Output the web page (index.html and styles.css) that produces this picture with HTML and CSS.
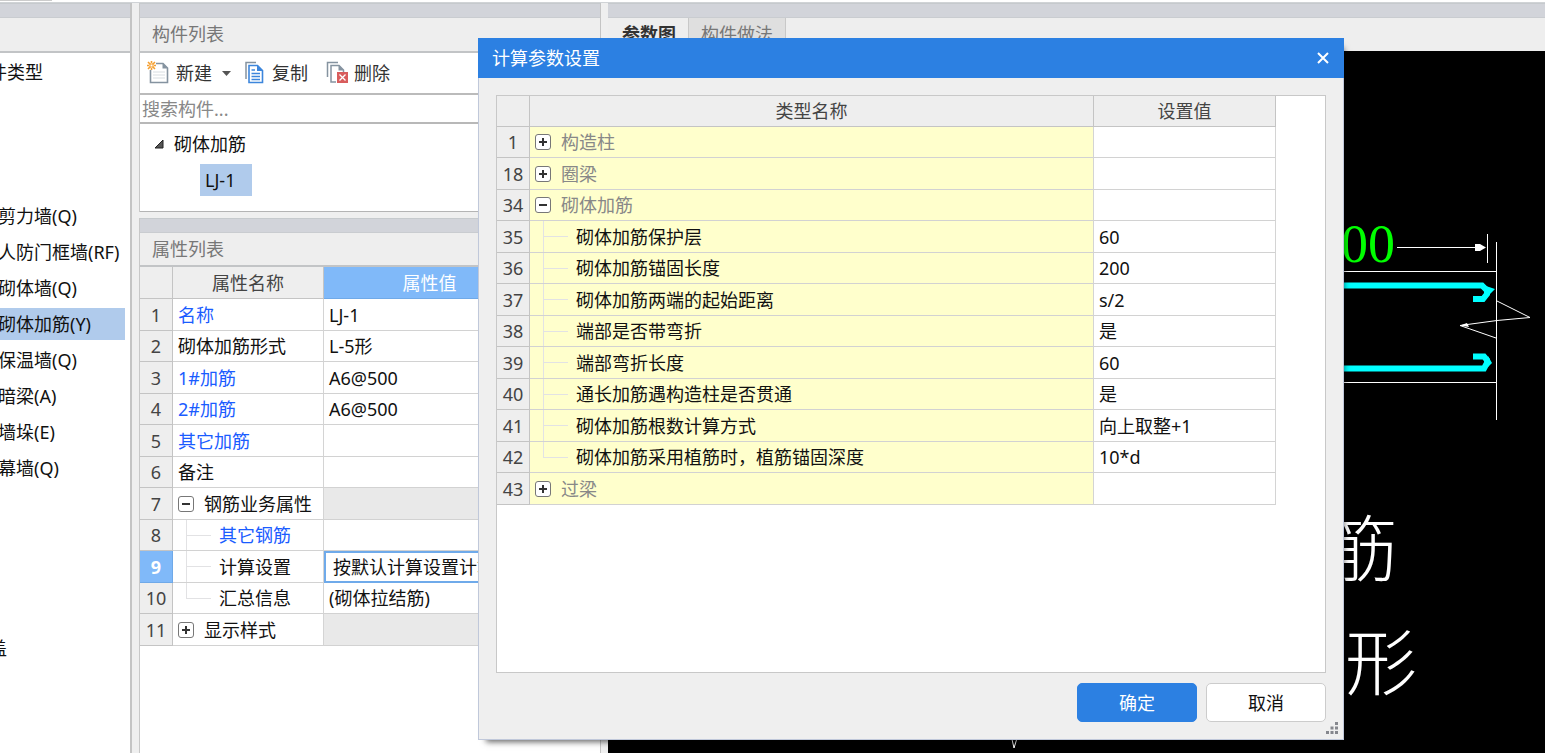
FILE: index.html
```html
<!DOCTYPE html>
<html lang="zh-CN">
<head>
<meta charset="utf-8">
<title>计算参数设置</title>
<link rel="stylesheet" href="styles.css">
</head>
<body>
<div class="app">
  <div class="ribbon-edge"><span class="ribbon-tab"></span></div>
  <main class="workspace">
    <nav class="panel nav-panel" aria-label="构件类型">
      <div class="dock-bar"></div>
      <div class="panel-title"></div>
      <div class="nav-body">
        <div class="nav-group outer"><button>件类型</button></div>
        <div class="nav-group">
          <button>剪力墙(Q)</button>
          <button>人防门框墙(RF)</button>
          <button>砌体墙(Q)</button>
          <button class="selected">砌体加筋(Y)</button>
          <button>保温墙(Q)</button>
          <button>暗梁(A)</button>
          <button>墙垛(E)</button>
          <button>幕墙(Q)</button>
        </div>
        <div class="nav-group outer far"><button>盖</button></div>
      </div>
    </nav>

    <div class="middle">
      <section class="panel">
        <div class="dock-bar"></div>
        <h2 class="panel-title">构件列表</h2>
        <div class="toolbar">
          <button class="tool">
            <svg width="24" height="24" viewBox="0 0 24 24" fill="none">
              <path d="M9 2.500H16L20.500 7V21.500H3.500V9" stroke="#8593a0" stroke-width="1.600"/>
              <path d="M15.500 2V7.500H21Z" fill="#8593a0"/>
              <path d="M6 11H18M6 14H18M6 17H18" stroke="#d8dde1"/>
              <path d="M1 1L8 8M8 1L1 8M4.500 0V2M4.500 7V9M0 4.500H2M7 4.500H9" stroke="#f5a032" stroke-width="1.600"/>
              <rect x="3" y="3" width="3" height="3" fill="#fff" stroke="#f5a032"/>
            </svg>
            <span>新建</span>
            <svg class="caret" width="9" height="5" viewBox="0 0 9 5"><path d="M0 0H9L4.500 5Z" fill="#555"/></svg>
          </button>
          <button class="tool copy">
            <svg width="20" height="24" viewBox="0 0 20 24" fill="none">
              <path d="M2 18V1.500H12" stroke="#8593a0" stroke-width="1.500"/>
              <path d="M5 4.500H13.500L18.500 9.500V21.500H5Z" stroke="#3d86dc" stroke-width="1.600"/>
              <path d="M13 4V10H19Z" fill="#3d86dc"/>
              <path d="M7.500 9H11M7.500 12.500H16M7.500 15.500H16M7.500 18.500H16" stroke="#3d86dc" stroke-width="1.300"/>
            </svg>
            <span>复制</span>
          </button>
          <button class="tool delete">
            <svg width="22" height="24" viewBox="0 0 22 24" fill="none">
              <path d="M1.500 16V1.500H12" stroke="#8593a0" stroke-width="1.500"/>
              <path d="M10 21H5V4.500H13L17.500 9V11" stroke="#8593a0" stroke-width="1.500"/>
              <path d="M12.500 4V9.500H18Z" fill="#8593a0"/>
              <rect x="11" y="11" width="11" height="11" fill="#d85c5c"/>
              <path d="M13.500 13.500L19.500 19.500M19.500 13.500L13.500 19.500" stroke="#fff" stroke-width="1.300"/>
            </svg>
            <span>删除</span>
          </button>
        </div>
        <input class="search" type="text" placeholder="搜索构件..." aria-label="搜索构件">
        <div class="tree">
          <button class="tree-root">
            <svg width="10" height="10" viewBox="0 0 10 10"><path d="M9 1V9H1Z" fill="#555" stroke="#222"/></svg>
            <span>砌体加筋</span>
          </button>
          <button class="tree-leaf">LJ-1</button>
        </div>
      </section>

      <section class="panel properties">
        <div class="dock-bar"></div>
        <h2 class="panel-title">属性列表</h2>
        <table class="grid property-grid">
          <colgroup><col class="c-num"><col class="c-name"><col class="c-value"><col></colgroup>
          <thead><tr><th></th><th>属性名称</th><th class="active">属性值</th><th></th></tr></thead>
          <tbody>
            <tr><th>1</th><td class="link">名称</td><td>LJ-1</td><td></td></tr>
            <tr><th>2</th><td>砌体加筋形式</td><td>L-5形</td><td></td></tr>
            <tr><th>3</th><td class="link">1#加筋</td><td>A6@500</td><td></td></tr>
            <tr><th>4</th><td class="link">2#加筋</td><td>A6@500</td><td></td></tr>
            <tr><th>5</th><td class="link">其它加筋</td><td></td><td></td></tr>
            <tr><th>6</th><td>备注</td><td></td><td></td></tr>
            <tr><th>7</th><td><div class="group"><button class="fold minus" aria-label="折叠"></button>钢筋业务属性</div></td><td class="disabled"></td><td class="disabled"></td></tr>
            <tr><th>8</th><td class="child link">其它钢筋</td><td></td><td></td></tr>
            <tr><th class="active">9</th><td class="child">计算设置</td><td class="editing">按默认计算设置计算</td><td></td></tr>
            <tr><th>10</th><td class="child last">汇总信息</td><td>(砌体拉结筋)</td><td></td></tr>
            <tr><th>11</th><td><div class="group"><button class="fold plus" aria-label="展开"></button>显示样式</div></td><td class="disabled"></td><td class="disabled"></td></tr>
          </tbody>
        </table>
      </section>
    </div>

    <section class="panel drawing">
      <div class="dock-bar"></div>
      <div class="tabs">
        <button class="tab current">参数图</button>
        <button class="tab">构件做法</button>
      </div>
      <svg class="canvas" aria-label="参数图">
        <text class="dimension" x="733" y="211">00</text>
        <g fill="none" stroke="#fff">
          <path d="M789 196.500H876"/>
          <path d="M879.500 183V212"/>
          <path d="M700 220.500H888M700 331.500H888M888.500 191V369"/>
          <path d="M889 250L922 266.500L889 269.500L852 274.500L888 287"/>
          <path d="M403 684L406 697L410 684"/>
        </g>
        <path d="M867 193H872L878 196.500L872 200H867Z" fill="#fff"/>
        <path d="M852 274.500L859 272L861 276Z" fill="#fff"/>
        <g fill="none" stroke="#0ff" stroke-width="6">
          <path d="M700 234.500H874L879 239.500V243L875 248H865"/>
          <path d="M700 317.500H876L879 312V309L876 305.500H865"/>
        </g>
        <path d="M878 235L887 238L880 245ZM880 305L884 312L880 316Z" fill="#0ff"/>
        <text class="caption" x="718" y="524">筋</text>
        <text class="caption" x="737" y="638">形</text>
      </svg>
    </section>
  </main>

  <div class="dialog" role="dialog" aria-label="计算参数设置">
    <header class="dialog-title">
      <span>计算参数设置</span>
      <button class="close" aria-label="关闭">
        <svg width="14" height="14" viewBox="0 0 14 14"><path d="M2 2L12 12M12 2L2 12" stroke="#fff" stroke-width="2"/></svg>
      </button>
    </header>
    <div class="dialog-body">
      <div class="frame">
        <table class="grid setting-grid">
          <colgroup><col class="c-num"><col><col class="c-set"></colgroup>
          <thead><tr><th></th><th>类型名称</th><th>设置值</th></tr></thead>
          <tbody>
            <tr><th>1</th><td><div class="group"><button class="fold plus" aria-label="展开"></button>构造柱</div></td><td></td></tr>
            <tr><th>18</th><td><div class="group"><button class="fold plus" aria-label="展开"></button>圈梁</div></td><td></td></tr>
            <tr><th>34</th><td><div class="group"><button class="fold minus" aria-label="折叠"></button>砌体加筋</div></td><td></td></tr>
            <tr><th>35</th><td class="child">砌体加筋保护层</td><td>60</td></tr>
            <tr><th>36</th><td class="child">砌体加筋锚固长度</td><td>200</td></tr>
            <tr><th>37</th><td class="child">砌体加筋两端的起始距离</td><td>s/2</td></tr>
            <tr><th>38</th><td class="child">端部是否带弯折</td><td>是</td></tr>
            <tr><th>39</th><td class="child">端部弯折长度</td><td>60</td></tr>
            <tr><th>40</th><td class="child">通长加筋遇构造柱是否贯通</td><td>是</td></tr>
            <tr><th>41</th><td class="child">砌体加筋根数计算方式</td><td>向上取整+1</td></tr>
            <tr><th>42</th><td class="child last">砌体加筋采用植筋时，植筋锚固深度</td><td>10*d</td></tr>
            <tr><th>43</th><td><div class="group"><button class="fold plus" aria-label="展开"></button>过梁</div></td><td></td></tr>
          </tbody>
        </table>
      </div>
      <footer class="actions">
        <button class="btn primary">确定</button>
        <button class="btn">取消</button>
      </footer>
    </div>
    <svg class="grip" width="13" height="13" viewBox="0 0 13 13"><path d="M9 0h3v3h-3zM4.500 4.500h3v3h-3zM9 4.500h3v3h-3zM0 9h3v3h-3zM4.500 9h3v3h-3zM9 9h3v3h-3z" fill="#85878d"/></svg>
  </div>
</div>
</body>
</html>
```
FILE: styles.css
```css
* { box-sizing: border-box; }

body {
  margin: 0;
  font: 18px/24px "Noto Sans", "Noto Sans CJK SC", sans-serif;
  color: #111;
  background: #efefef;
}

button, input {
  font: inherit;
  color: inherit;
  border: 0;
  border-radius: 0;
  padding: 0;
  background: none;
}

.app {
  position: relative;
  display: flex;
  flex-direction: column;
  height: 100vh;
  overflow: hidden;
}

.ribbon-edge { height: 3px; background: #fff; border-bottom: 1px solid #d0d3d6; }
.ribbon-tab { display: block; width: 52px; height: 1px; background: #ccc; }

.workspace { flex: 1; display: flex; gap: 7px; min-height: 0; }

.panel { display: flex; flex-direction: column; min-width: 0; }

.dock-bar {
  flex: none;
  height: 15px;
  background: #d2d4da;
  border-top: 1px solid #c6cacd;
  border-bottom: 1px solid #c9ccd0;
}

.panel-title {
  flex: none;
  height: 35px;
  margin: 0;
  padding: 4px 12px;
  font-size: 18px;
  font-weight: 400;
  color: #777;
  background: #eee;
  border-bottom: 2px solid #c2c4c6;
}

/* Component type list */
.nav-panel { flex: 0 0 132px; overflow: hidden; border-right: 2px solid #c4c4c4; }
.nav-body { flex: 1; background: #fff; padding-top: 1px; }
.nav-group { display: flex; flex-direction: column; gap: 4px; padding: 2px 5px 2px 0; margin-top: 108px; }
.nav-group.outer { margin-top: 0; }
.nav-group.far { margin-top: 144px; }
.nav-group button { height: 32px; text-align: left; white-space: nowrap; text-indent: -2px; }
.nav-group.outer button { text-indent: -11px; }
.nav-group .selected { background: #b0cbec; }

/* Component list */
.middle { flex: 0 0 462px; display: flex; flex-direction: column; gap: 6px; min-width: 0; }
.middle .panel { border-left: 1px solid #c8c8c8; border-right: 1px solid #c4c4c4; }

.toolbar {
  display: flex;
  height: 42px;
  padding: 0 7px;
  background: #fff;
  border-bottom: 2px solid #bbb;
}
.tool { display: flex; align-items: center; gap: 5px; color: #333; }
.tool .caret { margin-left: 5px; }
.tool.copy { margin-left: 13px; gap: 8px; }
.tool.delete { margin-left: 18px; gap: 6px; }

.search {
  height: 29px;
  padding: 0 2px;
  background: #fff;
  border-bottom: 2px solid #b8b8b8;
}
.search::placeholder { color: #888; opacity: 1; }

.tree {
  display: flex;
  flex-direction: column;
  align-items: flex-start;
  gap: 4px;
  padding: 4px 14px 15px;
  background: #fff;
  border-bottom: 1px solid #b4b4b4;
}
.tree-root { display: flex; align-items: center; gap: 10px; height: 32px; }
.tree-leaf { height: 32px; margin-left: 46px; padding: 0 17px 0 5px; background: #b0cbec; }

.properties { flex: 1; background: #fff; }
.properties .panel-title { height: 34px; }

/* Grids */
.grid {
  border-collapse: separate;
  border-spacing: 0;
  table-layout: fixed;
  width: 100%;
}
.grid th, .grid td {
  height: 31px;
  padding: 0 5px;
  border-right: 1px solid #d4d4d4;
  border-bottom: 1px solid #d2d2d2;
  line-height: 24px;
  text-align: left;
  white-space: nowrap;
  overflow: hidden;
}
.setting-grid tbody tr:nth-child(even) > *,
.property-grid tbody tr:nth-child(odd) > *,
.property-grid thead th { height: 32px; }
.grid th {
  padding: 0;
  font-weight: 400;
  text-align: center;
  color: #444;
  background: #eee;
  border-color: #c4c4c4;
}
.grid .active { color: #fff; background: #80b9f9; border-color: #6fa9e8; }
.grid tbody .active { font-weight: 700; }
.grid .link { color: #1a5cff; }
.grid .disabled { background: #e9e9e9; }
.grid .editing { padding-left: 7px; border: 2px solid #6faaea; }
.c-num { width: 33px; }
.c-name { width: 151px; }
.c-value { width: 212px; }
.c-set { width: 182px; }

.group { display: flex; align-items: center; gap: 10px; }
.fold {
  flex: none;
  width: 16px;
  height: 16px;
  border: 1px solid #777;
  border-radius: 3px;
  background: linear-gradient(#333, #333) center / 8px 2px no-repeat #fff;
}
.fold.plus {
  background:
    linear-gradient(#333, #333) center / 8px 2px no-repeat,
    linear-gradient(#333, #333) center / 2px 8px no-repeat #fff;
}

.grid .child {
  padding-left: 46px;
  background-image: linear-gradient(#e2e2e4, #e2e2e4), linear-gradient(#e2e2e4, #e2e2e4);
  background-position: 13px 0, 13px 15px;
  background-size: 1px 100%, 25px 1px;
  background-repeat: no-repeat;
}
.grid .child.last { background-size: 1px 15px, 25px 1px; }

/* Drawing */
.drawing { flex: 1; }
.tabs { display: flex; height: 33px; background: #eee; }
.tab {
  padding: 0 12px 2px 12px;
  color: #777;
  background: #dfdfdf;
  border-right: 1px solid #c8c8c8;
}
.tab.current { padding-left: 14px; font-weight: 700; color: #333; background: #eee; }
.canvas { flex: 1; width: 100%; background: #000; }
.dimension { font: 54px "Liberation Serif", serif; fill: #0f0; }
.caption { font: 300 72px "Noto Sans CJK SC", sans-serif; fill: #fff; }

/* Dialog */
.dialog {
  position: absolute;
  inset: 38px 201px 13px 478px;
  display: flex;
  flex-direction: column;
  background: #efefef;
  border: 1px solid #c0c8da;
  border-top: 0;
  box-shadow: 4px 6px 6px -4px rgba(0, 0, 0, .6);
}
.dialog-title {
  display: flex;
  align-items: center;
  justify-content: space-between;
  height: 40px;
  margin: 0 -1px;
  padding: 0 14px;
  color: #fff;
  background: #2c80e2;
}
.close { display: flex; }
.dialog-body { flex: 1; display: flex; flex-direction: column; gap: 10px; padding: 17px 17px; min-height: 0; }
.frame { flex: 1; padding-right: 49px; background: #fff; border: 1px solid #c8c8c8; min-height: 0; }
.setting-grid td:nth-child(2) { background-color: #ffc; }
.setting-grid .group { color: #888; }

.actions { display: flex; justify-content: flex-end; gap: 9px; }
.btn { width: 120px; height: 39px; border: 1px solid #ccc; border-radius: 5px; background: #fff; }
.btn.primary { color: #fff; background: #2c80e2; border-color: #2c80e2; }
.grip { position: absolute; right: 4px; bottom: 4px; }
```
